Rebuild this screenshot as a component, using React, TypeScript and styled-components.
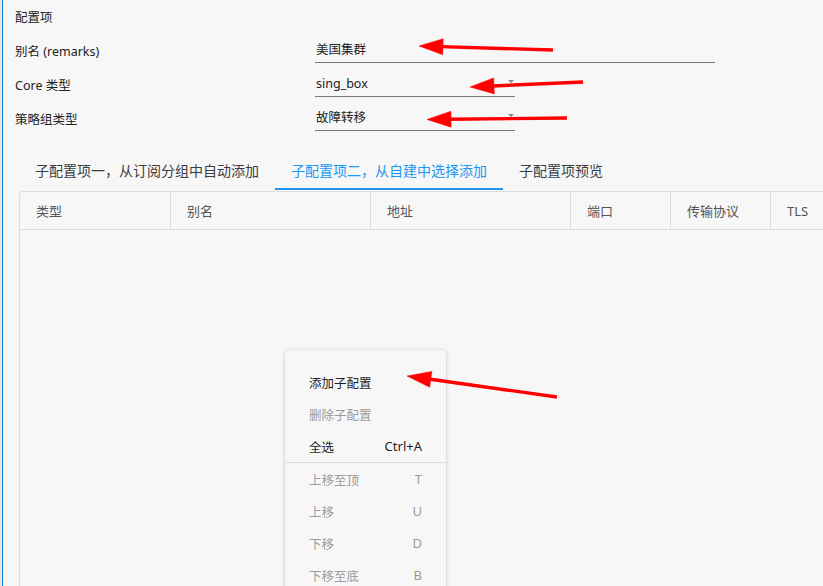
import React from "react";
import styled, { createGlobalStyle } from "styled-components";

const GlobalStyle = createGlobalStyle`
  html, body {
    margin: 0;
    padding: 0;
    background: #f7f7f7;
  }
  body {
    font-family: "Noto Sans", "Noto Sans CJK SC", sans-serif;
    color: #222;
  }
`;

const Page = styled.div`
  position: relative;
  width: 823px;
  height: 586px;
  overflow: hidden;
  display: flex;
  background: #f7f7f7;
`;

const Edge = styled.div`
  width: 2px;
  flex: none;
  background: #e4e4e4;
`;

const Content = styled.div`
  flex: 1;
  min-width: 0;
  display: flex;
  flex-direction: column;
  border-left: 1px solid #1683e0;
  padding-left: 12px;
`;

const Row = styled.div`
  display: grid;
  grid-template-columns: 300px auto;
  align-items: center;
  height: 34px;
  font-size: 12.5px;
`;

const Label = styled.span`
  color: #222;
  margin-top: -1px;
`;

const Field = styled.div<{ $width: number }>`
  position: relative;
  width: ${(p) => p.$width}px;
  height: 24px;
  line-height: 22px;
  padding-left: 1px;
  box-sizing: border-box;
  border-bottom: 1px solid #7a7a7a;
  font-size: 12.5px;
  color: #222;
`;

const Caret = styled.span`
  position: absolute;
  right: 1px;
  top: 7px;
  width: 0;
  height: 0;
  border-left: 3.5px solid transparent;
  border-right: 3.5px solid transparent;
  border-top: 3.5px solid #888;
`;

const TabBar = styled.div`
  display: flex;
  margin: 14px 0 0 4px;
  height: 40px;
`;

const Tab = styled.div<{ $active?: boolean }>`
  padding: 0 16px;
  display: flex;
  align-items: center;
  font-size: 14px;
  color: ${(p) => (p.$active ? "#2196f3" : "#3c3c3c")};
  border-bottom: 2px solid ${(p) => (p.$active ? "#2196f3" : "transparent")};
  padding-top: 1px;
  box-sizing: border-box;
`;

const Table = styled.div`
  flex: 1;
  margin: 1px 0 0 4px;
  width: 900px;
  border-top: 1px solid #dedede;
  border-left: 1px solid #dedede;
  border-top-left-radius: 4px;
  display: flex;
  flex-direction: column;
`;

const HeaderRow = styled.div`
  display: flex;
  height: 37px;
  border-bottom: 1px solid #dedede;
`;

const HeaderCell = styled.div<{ $width: number }>`
  width: ${(p) => p.$width}px;
  flex: none;
  box-sizing: border-box;
  padding-left: 16px;
  display: flex;
  align-items: center;
  font-size: 13px;
  color: #555;
  border-right: 1px solid #dedede;
`;

const Menu = styled.div`
  position: absolute;
  left: 285px;
  top: 350px;
  width: 161px;
  height: 260px;
  box-sizing: border-box;
  padding-top: 16px;
  background: #f7f7f7;
  border-radius: 3px;
  box-shadow: 0 0 1px rgba(0, 0, 0, 0.25), 0 1px 4px rgba(0, 0, 0, 0.18);
`;

const MenuItem = styled.div<{ $disabled?: boolean }>`
  height: 32px;
  padding: 0 24px;
  display: flex;
  align-items: center;
  justify-content: space-between;
  font-size: 12.5px;
  color: ${(p) => (p.$disabled ? "#9a9a9a" : "#1e1e1e")};
`;

const Shortcut = styled.span`
  font-size: 13px;
`;

const Separator = styled.div`
  height: 1px;
  background: #dcdcdc;
`;

const Overlay = styled.svg`
  position: absolute;
  left: 0;
  top: 0;
  pointer-events: none;
`;

type Pt = [number, number];

function Arrow({ tail, tip }: { tail: Pt; tip: Pt }) {
  const dx = tip[0] - tail[0];
  const dy = tip[1] - tail[1];
  const len = Math.hypot(dx, dy);
  const ux = dx / len;
  const uy = dy / len;
  const px = -uy;
  const py = ux;
  const headLen = 24;
  const half = 8;
  const bx = tip[0] - ux * headLen;
  const by = tip[1] - uy * headLen;
  const head = [
    [tip[0], tip[1]],
    [bx + px * half, by + py * half],
    [bx - px * half, by - py * half],
  ]
    .map((p) => p.join(","))
    .join(" ");
  return (
    <g fill="#ff0000" stroke="#ff0000">
      <line x1={tail[0]} y1={tail[1]} x2={bx + ux * 2} y2={by + uy * 2} strokeWidth={3.4} />
      <polygon points={head} strokeWidth={0.5} />
    </g>
  );
}

const columns = [
  { title: "类型", width: 151 },
  { title: "别名", width: 200 },
  { title: "地址", width: 200 },
  { title: "端口", width: 100 },
  { title: "传输协议", width: 100 },
  { title: "TLS", width: 100 },
];

const menuTop = [
  { label: "添加子配置" },
  { label: "删除子配置", disabled: true },
  { label: "全选", key: "Ctrl+A" },
];

const menuMove = [
  { label: "上移至顶", key: "T" },
  { label: "上移", key: "U" },
  { label: "下移", key: "D" },
  { label: "下移至底", key: "B" },
];

export default function App() {
  return (
    <>
      <GlobalStyle />
      <Page>
        <Edge />
        <Content>
          <Row>
            <Label>配置项</Label>
          </Row>
          <Row>
            <Label>别名 (remarks)</Label>
            <Field $width={400}>美国集群</Field>
          </Row>
          <Row>
            <Label>Core 类型</Label>
            <Field $width={200}>
              sing_box
              <Caret />
            </Field>
          </Row>
          <Row>
            <Label>策略组类型</Label>
            <Field $width={200}>
              故障转移
              <Caret />
            </Field>
          </Row>

          <TabBar>
            <Tab>子配置项一，从订阅分组中自动添加</Tab>
            <Tab $active>子配置项二，从自建中选择添加</Tab>
            <Tab>子配置项预览</Tab>
          </TabBar>

          <Table>
            <HeaderRow>
              {columns.map((c) => (
                <HeaderCell key={c.title} $width={c.width}>
                  {c.title}
                </HeaderCell>
              ))}
            </HeaderRow>
          </Table>
        </Content>

        <Menu>
          {menuTop.map((m) => (
            <MenuItem key={m.label} $disabled={m.disabled}>
              <span>{m.label}</span>
              {m.key && <Shortcut>{m.key}</Shortcut>}
            </MenuItem>
          ))}
          <Separator />
          {menuMove.map((m) => (
            <MenuItem key={m.label} $disabled>
              <span>{m.label}</span>
              <Shortcut>{m.key}</Shortcut>
            </MenuItem>
          ))}
        </Menu>

        <Overlay width={823} height={586}>
          <Arrow tail={[553, 50]} tip={[419, 46]} />
          <Arrow tail={[583, 82]} tip={[470, 87]} />
          <Arrow tail={[567, 118]} tip={[427, 119.5]} />
          <Arrow tail={[557, 397]} tip={[407, 376]} />
        </Overlay>
      </Page>
    </>
  );
}
